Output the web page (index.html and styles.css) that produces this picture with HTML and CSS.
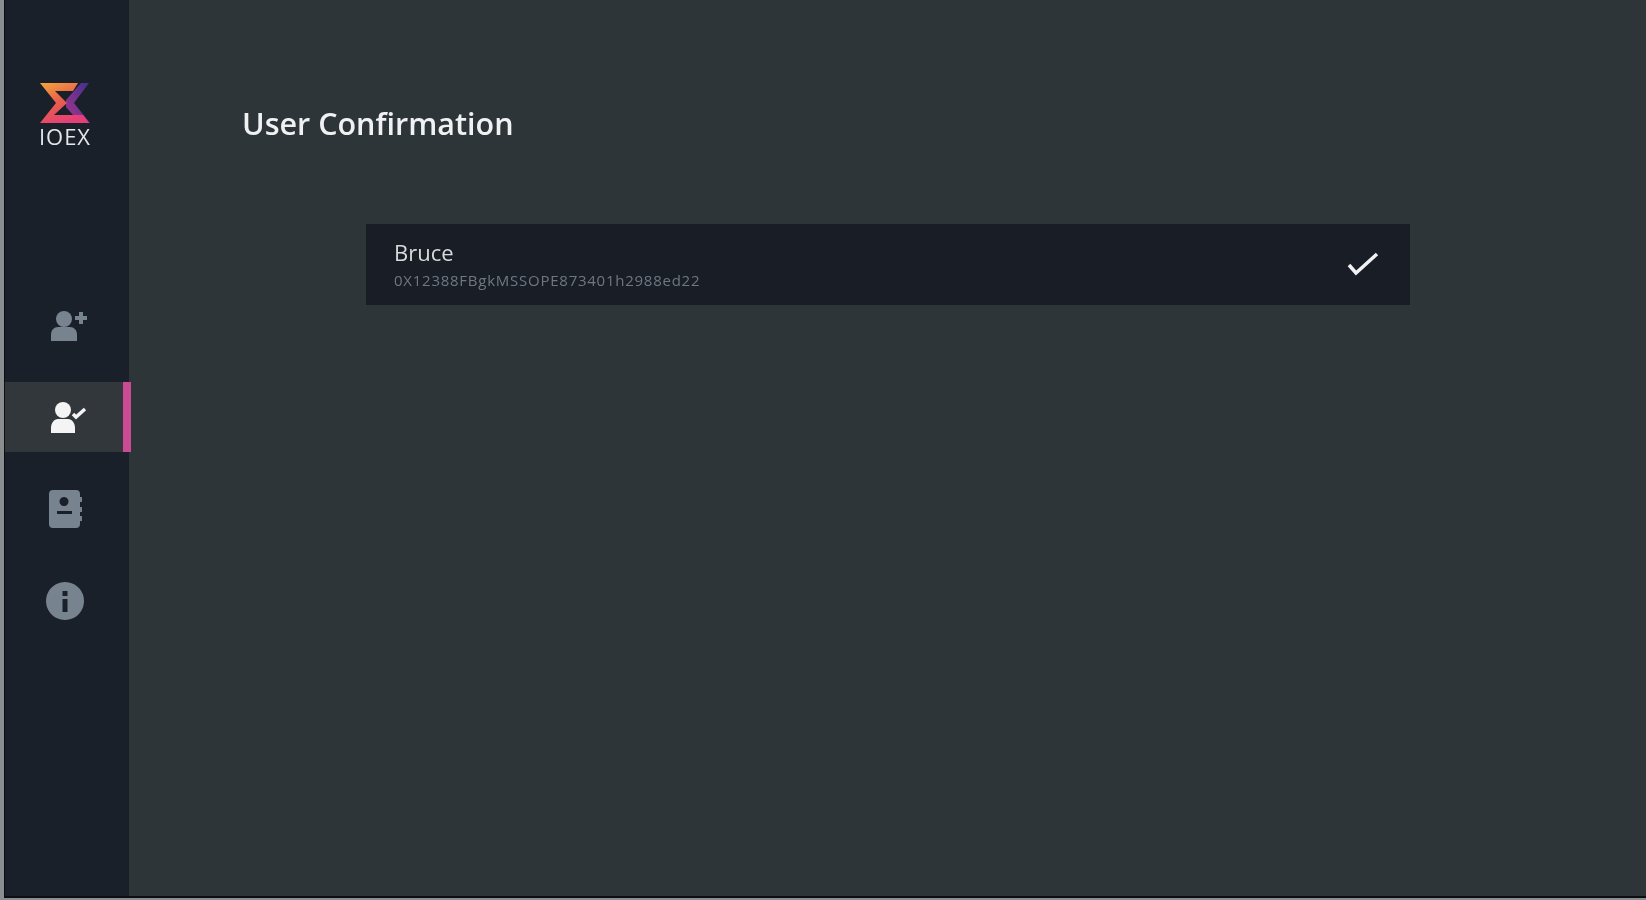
FILE: index.html
```html
<!DOCTYPE html>
<html lang="en">
<head>
<meta charset="utf-8">
<title>User Confirmation</title>
<link rel="stylesheet" href="styles.css">
</head>
<body>
<div class="app">
  <aside class="sidebar">
    <div class="brand">
      <svg class="logo" width="52" height="40" viewBox="0 0 52 40">
        <defs>
          <linearGradient id="lg" x1="0" y1="0" x2="0.5" y2="1">
            <stop offset="0" stop-color="#f3a83c"/>
            <stop offset="0.5" stop-color="#e8604a"/>
            <stop offset="1" stop-color="#e53f78"/>
          </linearGradient>
          <linearGradient id="lp" x1="1" y1="0" x2="0" y2="1">
            <stop offset="0" stop-color="#3f2f8f"/>
            <stop offset="1" stop-color="#a8368c"/>
          </linearGradient>
        </defs>
        <polygon fill="url(#lp)" points="42,0 50,0 35,20 51,40 41,40 27,24 27,17"/>
        <polygon fill="url(#lg)" points="1,0 39,0 34,8 16,8 28,20 15,32 44,32 50,40 1,40 17,20"/>
      </svg>
      <span class="brand-name">IOEX</span>
    </div>
    <nav class="nav">
      <a class="nav-item">
        <svg width="40" height="32" viewBox="0 0 40 32" class="icon">
          <circle cx="16" cy="10" r="8"/>
          <path d="M3 32v-6c0-5 3-8 7-8h12c4 0 7 3 7 8v6z"/>
          <path d="M35 7h4v4h-4v4h-4v-4h-4V7h4V3h4z"/>
        </svg>
      </a>
      <a class="nav-item active">
        <svg width="40" height="32" viewBox="0 0 40 32" class="icon">
          <circle cx="16" cy="9" r="8"/>
          <path d="M4 32v-5c0-5 3-9 7-9h10c4 0 7 4 7 9v5z"/>
          <path d="M26 13l3 3 9-8" fill="none" stroke-width="3.500"/>
        </svg>
      </a>
      <a class="nav-item">
        <svg width="40" height="40" viewBox="0 0 40 40" class="icon">
          <path fill-rule="evenodd" d="M8 1h23q4 0 4 4v30q0 4-4 4H8q-4 0-4-4V5q0-4 4-4zM19 8a4.500 4.500 0 1 0 .01 0zM12 22v3h15v-3z"/>
          <path d="M34 8h3v5h-3zM34 18h3v5h-3zM34 27h3v5h-3z"/>
        </svg>
      </a>
      <a class="nav-item">
        <svg width="40" height="40" viewBox="0 0 40 40" class="icon">
          <path fill-rule="evenodd" d="M20 1a19 19 0 1 0 .01 0zM17.500 10h5v5h-5zM17.500 18h5v13h-5z"/>
        </svg>
      </a>
    </nav>
  </aside>
  <main class="main">
    <h1 class="title">User Confirmation</h1>
    <section class="card">
      <div class="card-text">
        <div class="card-name">Bruce</div>
        <div class="card-id">0X12388FBgkMSSOPE873401h2988ed22</div>
      </div>
      <svg class="check" width="34" height="28" viewBox="0 0 34 28">
        <path d="M3 15l7 8L31 4" fill="none" stroke="#f2f2f2" stroke-width="3.500"/>
      </svg>
    </section>
  </main>
</div>
<div class="footer-strip"></div>
</body>
</html>
```
FILE: styles.css
```css
* { box-sizing: border-box; }
html, body { margin: 0; height: 100%; overflow: hidden; }
body {
  display: flex;
  flex-direction: column;
  background: #8b8e90;
  font-family: "Open Sans", "Noto Sans", sans-serif;
}
.app {
  flex: 1;
  display: flex;
  min-height: 0;
  margin-left: 4px;
  background: #2e3538;
  border-left: 1px solid #0c0e12;
  border-bottom: 2px solid #0c0e12;
}
.footer-strip { height: 2px; }
.sidebar {
  width: 124px;
  flex: none;
  background: #1a2029;
  display: flex;
  flex-direction: column;
}
.brand {
  display: flex;
  flex-direction: column;
  align-items: center;
  gap: 1px;
  padding: 83px 9px 0 5px;
  height: 290px;
}
.logo { display: block; }
.brand-name {
  color: #e4e6e8;
  font-size: 22px;
  line-height: 24px;
  letter-spacing: 1px;
}
.nav { display: flex; flex-direction: column; gap: 22px; }
.nav-item {
  height: 70px;
  width: 124px;
  display: flex;
  align-items: center;
  justify-content: center;
  padding-right: 4px;
}
.nav-item:first-child .icon { margin-left: 5px; }
.icon { fill: #77838f; stroke: none; }
.nav-item.active {
  width: 126px;
  background: #31373a;
  border-right: 8px solid #cb4a94;
  padding: 0;
}
.nav-item.active .icon { fill: #f4f4f4; margin-left: 6px; }
.nav-item.active .icon path[fill="none"] { stroke: #f4f4f4; }
.main {
  flex: 1;
  min-width: 0;
  padding: 103px 0 0 113px;
}
.title {
  margin: 0;
  color: #f0f1f2;
  font-size: 30.500px;
  line-height: 40px;
  font-weight: 600;
  filter: blur(0.5px);
}
.card {
  margin: 81px 0 0 124px;
  width: 1044px;
  height: 81px;
  padding: 0 30px 0 28px;
  background: #181d26;
  display: flex;
  align-items: center;
  justify-content: space-between;
}
.card-text { filter: blur(0.6px); }
.card-name {
  color: #d8dadc;
  font-size: 22px;
  line-height: 28px;
  margin-bottom: 6px;
  margin-top: -4px;
}
.card-id {
  color: #6f7880;
  font-size: 15px;
  line-height: 16px;
  letter-spacing: 0.75px;
}
.check { filter: blur(0.4px); margin-bottom: 2px; }
.sidebar svg, .brand-name { filter: blur(0.6px); }
```
